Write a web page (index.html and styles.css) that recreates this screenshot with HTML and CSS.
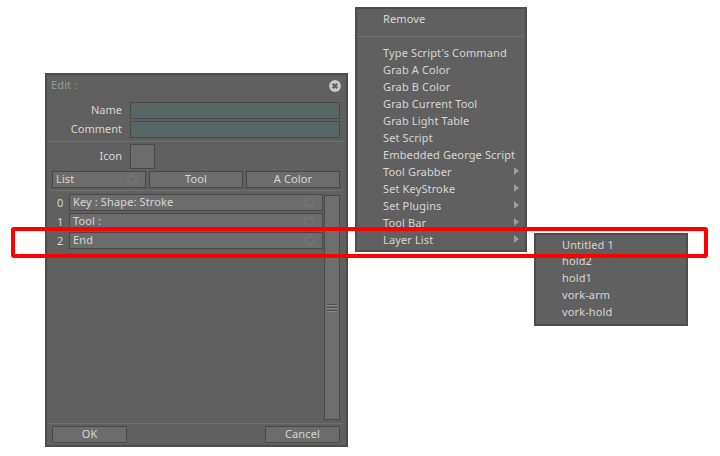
FILE: index.html
```html
<!DOCTYPE html>
<html lang="en">
<head>
<meta charset="utf-8">
<title>Edit</title>
<link rel="stylesheet" href="styles.css">
</head>
<body>
<div class="canvas">
  <section class="dialog">
    <header class="title-row">
      <span class="title">Edit :</span>
      <svg class="close" width="12" height="12" viewBox="0 0 13 13"><circle cx="6.5" cy="6.5" r="6.4" fill="#c8c8c8"/><path d="M4 4l5 5M9 4l-5 5" stroke="#606060" stroke-width="2.4"/></svg>
    </header>
    <div class="form-row"><label class="label">Name</label><div class="input"></div></div>
    <div class="form-row"><label class="label">Comment</label><div class="input"></div></div>
    <hr class="sep sep-a">
    <div class="form-row"><label class="label">Icon</label><div class="icon-box"></div></div>
    <div class="tabs">
      <div class="btn btn-left">List<svg class="caret" width="13" height="13" viewBox="0 0 13 13"><circle cx="6.5" cy="6.5" r="6" fill="#707070"/><path d="M3.5 5h6l-3 4z" fill="#666"/></svg></div>
      <div class="btn">Tool</div>
      <div class="btn">A Color</div>
    </div>
    <hr class="sep sep-b">
    <div class="list-area">
      <div class="rows">
        <div class="row"><span class="num">0</span><div class="btn btn-left grow">Key : Shape: Stroke<svg class="caret" width="13" height="13" viewBox="0 0 13 13"><circle cx="6.5" cy="6.5" r="6" fill="#707070"/><path d="M3.5 5h6l-3 4z" fill="#666"/></svg></div></div>
        <div class="row"><span class="num">1</span><div class="btn btn-left grow">Tool :<svg class="caret" width="13" height="13" viewBox="0 0 13 13"><circle cx="6.5" cy="6.5" r="6" fill="#707070"/><path d="M3.5 5h6l-3 4z" fill="#666"/></svg></div></div>
        <div class="row"><span class="num">2</span><div class="btn btn-left grow">End<svg class="caret" width="13" height="13" viewBox="0 0 13 13"><circle cx="6.5" cy="6.5" r="6" fill="#707070"/><path d="M3.5 5h6l-3 4z" fill="#666"/></svg></div></div>
      </div>
      <div class="scrollbar">
        <svg width="10" height="8" viewBox="0 0 10 8"><path d="M0 .5h10M0 3.5h10M0 6.5h10" stroke="#4c4c4c"/><path d="M0 1.5h10M0 4.5h10M0 7.5h10" stroke="#8a8a8a"/></svg>
      </div>
    </div>
    <hr class="sep sep-c">
    <footer class="actions">
      <div class="btn btn-action">OK</div>
      <div class="btn btn-action">Cancel</div>
    </footer>
  </section>

  <nav class="menu menu-main">
    <div class="item">Remove</div>
    <hr class="menu-sep">
    <div class="item">Type Script's Command</div>
    <div class="item">Grab A Color</div>
    <div class="item">Grab B Color</div>
    <div class="item">Grab Current Tool</div>
    <div class="item">Grab Light Table</div>
    <div class="item">Set Script</div>
    <div class="item">Embedded George Script</div>
    <div class="item arrow">Tool Grabber</div>
    <div class="item arrow">Set KeyStroke</div>
    <div class="item arrow">Set Plugins</div>
    <div class="item arrow">Tool Bar</div>
    <div class="item arrow">Layer List</div>
  </nav>

  <nav class="menu menu-sub">
    <div class="item">Untitled 1</div>
    <div class="item">hold2</div>
    <div class="item">hold1</div>
    <div class="item">vork-arm</div>
    <div class="item">vork-hold</div>
  </nav>

  <div class="highlight"></div>
</div>
</body>
</html>
```
FILE: styles.css
```css
* { box-sizing: border-box; }
html, body { margin: 0; padding: 0; background: #fff; }
.canvas {
  position: relative;
  width: 720px;
  height: 456px;
  overflow: hidden;
  font-family: "Noto Sans", "Open Sans", sans-serif;
  font-size: 11px;
  letter-spacing: 0.13px;
  color: #d6d6d6;
}
.dialog {
  position: absolute;
  left: 45px;
  top: 73px;
  width: 303px;
  height: 374px;
  background: #606060;
  border: 2px solid #4c4c4c;
  padding: 0 6px 2px 5px;
  display: flex;
  flex-direction: column;
}
.title-row {
  display: flex;
  justify-content: space-between;
  align-items: center;
  height: 18px;
  margin-right: -1px;
  margin-bottom: 9px;
}
.title { color: #9a9a9a; margin-left: -1px; }
.close { margin-top: 3px; }
.form-row { display: flex; align-items: center; gap: 8px; margin-bottom: 2px; }
.label { width: 70px; height: 17px; line-height: 15px; text-align: right; letter-spacing: 0; }
.input {
  width: 210px;
  height: 17px;
  background: #566765;
  border: 1px solid #484848;
}
.icon-box {
  width: 25px;
  height: 25px;
  background: #6c6c6c;
  border: 1px solid #484848;
}
.sep { border: 0; height: 1px; background: #6e6e6e; margin: 0 -5px; flex: none; }
.sep-a { margin-top: 1px; margin-bottom: 2px; }
.sep-b { margin-top: 2px; margin-bottom: 3px; }
.sep-c { margin-top: 2px; margin-bottom: 2px; }
.tabs { display: grid; grid-template-columns: repeat(3, 94px); gap: 3px; }
.btn {
  position: relative;
  height: 17px;
  line-height: 13px;
  background: #6c6c6c;
  border: 1px solid #484848;
  text-align: center;
}
.btn-left { text-align: left; padding-left: 3px; }
.caret { position: absolute; right: 6px; top: 1px; }
.list-area { flex: 1; display: flex; gap: 1px; min-height: 0; }
.rows { width: 272px; display: flex; flex-direction: column; gap: 2px; }
.row { display: flex; align-items: center; }
.num { width: 17px; padding-left: 5px; }
.grow { flex: 1; }
.scrollbar {
  width: 16px;
  margin-top: 1px;
  height: 225px;
  background: #6e6e6e;
  border: 1px solid #484848;
  display: flex;
  align-items: center;
  justify-content: center;
}
.actions { display: flex; justify-content: space-between; }
.btn-action { width: 75px; }
.menu {
  position: absolute;
  background: #606060;
  border: 2px solid #4c4c4c;
}
.menu-main { left: 355px; top: 7px; width: 172px; height: 245px; padding-top: 1px; }
.menu-sub { left: 534px; top: 233px; width: 154px; height: 93px; padding-top: 1px; }
.item {
  position: relative;
  height: 17px;
  line-height: 17px;
  padding-left: 26px;
  white-space: nowrap;
}
.menu-sub .item:first-child { height: 16px; }
.menu-sep { border: 0; height: 1px; background: #6e6e6e; margin: 9px 0 7px; }
.arrow::after {
  content: "";
  position: absolute;
  right: 6px;
  top: 4px;
  border-left: 5px solid #9c9c9c;
  border-top: 4px solid transparent;
  border-bottom: 4px solid transparent;
}
.highlight {
  position: absolute;
  left: 11px;
  top: 227px;
  width: 697px;
  height: 31px;
  border: 4px solid #f00;
  border-radius: 3px;
}
```
